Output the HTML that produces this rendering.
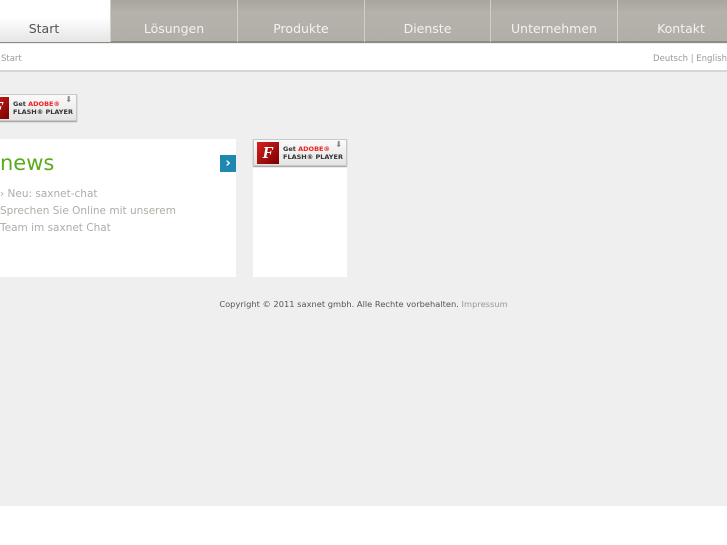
<!DOCTYPE html>
<html><head><meta charset="utf-8"><style>
*{margin:0;padding:0;box-sizing:border-box}
body{width:727px;height:545px;background:#fff;font-family:"DejaVu Sans","Liberation Sans",sans-serif;position:relative;overflow:hidden}
.bg{position:absolute;left:0;top:0;width:727px;height:506px;background:#efefef}
.nav{position:absolute;left:0;top:0;width:727px;height:43px;background:linear-gradient(#a9a49d,#b5b1ab 30%,#b2aea8);border-bottom:2px solid #8f8a84}
.tab{position:absolute;top:0;height:42px;color:#f4f2ef;font-size:12.5px;text-align:center;line-height:14px;padding-top:22px;border-left:1px solid #d2cec8;white-space:nowrap}
.start{background:linear-gradient(#fff 40%,#e6e6e6);color:#555;border:none}
.crumb{position:absolute;left:0;top:44px;width:727px;height:28px;background:#fff;border-bottom:2px solid #d6d6d6;font-size:8.5px;color:#999}
.badge{position:absolute;height:27px;background:linear-gradient(#fafafa,#e4e4e4);border:1px solid #c8c8c8;box-shadow:0 1px 1px #999;font-size:6.5px;font-weight:bold;color:#333;line-height:8px;white-space:nowrap;overflow:hidden}
.badge .f{position:absolute;left:3px;top:2px;width:22px;height:22px;background:linear-gradient(135deg,#d62020,#7a0000);color:#fff;font-style:italic;font-family:"Liberation Serif",serif;font-size:17px;text-align:center;line-height:22px}
.badge .t{position:absolute;left:29px;top:5px}
.badge .t span{color:#e22}
.badge .d{position:absolute;right:4px;top:1px;color:#888;font-size:8px}
.box{position:absolute;background:#fff}
</style></head><body>
<div class="bg"></div>
<div class="nav">
<div class="tab start" style="left:0;width:110px;padding-right:22px">Start</div>
<div class="tab" style="left:110px;width:127px">Lösungen</div>
<div class="tab" style="left:237px;width:127px">Produkte</div>
<div class="tab" style="left:364px;width:126px">Dienste</div>
<div class="tab" style="left:490px;width:127px">Unternehmen</div>
<div class="tab" style="left:617px;width:127px">Kontakt</div>
</div>
<div class="crumb"><span style="position:absolute;left:1px;top:10px">Start</span><span style="position:absolute;right:0;top:10px">Deutsch | English</span></div>
<div class="badge" style="left:-17px;top:94px;width:94px"><div class="f">F</div><div class="t">Get <span>ADOBE®</span><br>FLASH® PLAYER</div><div class="d">⬇</div></div>
<div class="box" style="left:0;top:139px;width:236px;height:138px">
<div style="position:absolute;left:0;top:12px;font-size:21px;color:#5aab1a">news</div>
<div style="position:absolute;left:220px;top:16px;width:16px;height:17px;background:#1f88b0;color:#fff;font-weight:bold;font-size:13px;text-align:center;line-height:17px">›</div>
<div style="position:absolute;left:0;top:47px;font-size:10.5px;line-height:17px;color:#b0aca6">› Neu: saxnet-chat<br>Sprechen Sie Online mit unserem<br>Team im saxnet Chat</div>
</div>
<div class="box" style="left:253px;top:139px;width:94px;height:138px"></div>
<div class="badge" style="left:253px;top:139px;width:94px"><div class="f">F</div><div class="t">Get <span>ADOBE®</span><br>FLASH® PLAYER</div><div class="d">⬇</div></div>
<div style="position:absolute;left:0;width:727px;top:299px;text-align:center;font-size:8.3px;color:#555">Copyright © 2011 saxnet gmbh. Alle Rechte vorbehalten. <span style="color:#999">Impressum</span></div>
</body></html>
